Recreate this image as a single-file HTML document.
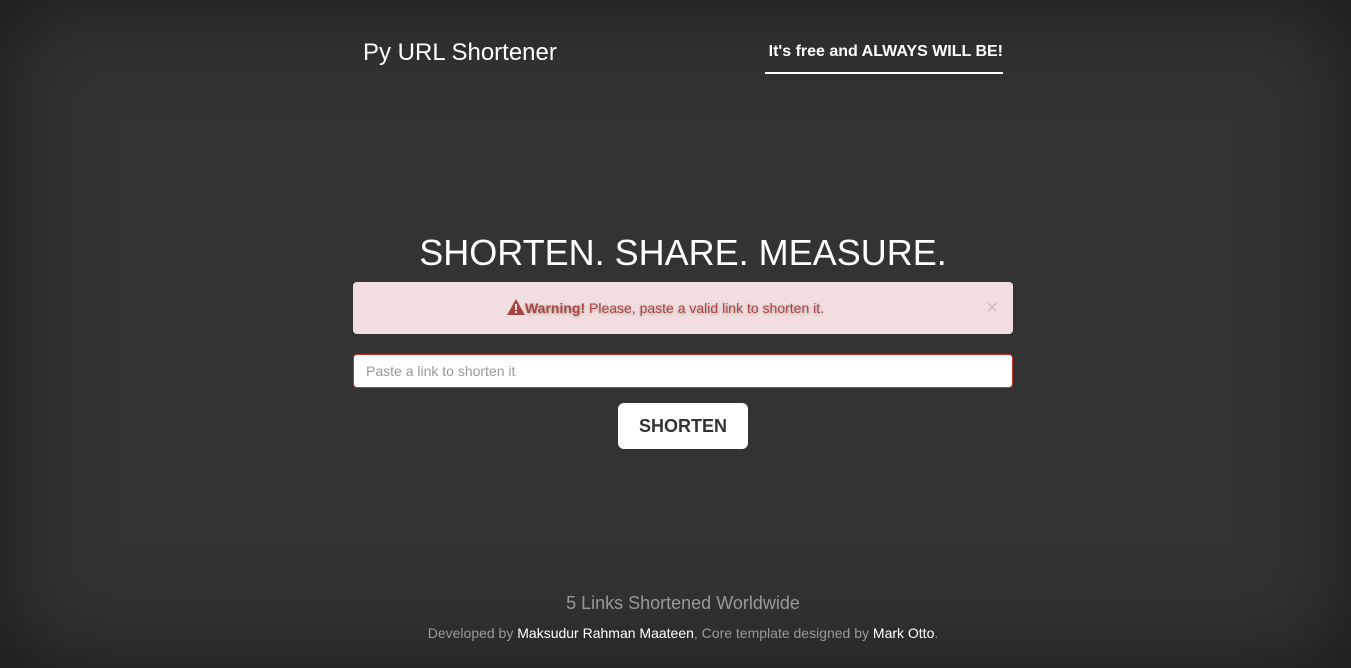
<!DOCTYPE html>
<html><head><meta charset="utf-8"><style>
html,body{margin:0;height:668px;overflow:hidden}
body{background:#333;box-shadow:inset 0 0 100px rgba(0,0,0,.5);font-family:"Liberation Sans",sans-serif;color:#fff;position:relative;width:1351px}
.abs{position:absolute}
.brand{left:363px;top:39px;font-size:24px}
.nav{left:765px;top:43px;font-size:16px;font-weight:bold;height:29px;border-bottom:2px solid #fff;width:238px;text-align:right}
h1{position:absolute;left:0;width:1366px;text-align:center;top:232px;margin:0;font-size:36px;font-weight:normal}
.alert{left:353px;top:282px;width:660px;height:52px;box-sizing:border-box;padding-right:35px;background:#f2dede;border-radius:4px;color:#a94442;font-size:14px;text-align:center;line-height:52px;text-shadow:0 1px 3px rgba(0,0,0,.3)}
.x{position:absolute;right:15px;top:0;color:#d9b9b9;font-size:20px;text-shadow:none}
.inp{left:353px;top:354px;width:660px;height:34px;box-sizing:border-box;background:#fff;border:1px solid #c9302c;border-radius:4px;color:#999;font-size:14px;line-height:32px;padding-left:12px}
.btn{left:618px;top:403px;width:130px;height:46px;background:#fff;border-radius:6px;color:#333;font-weight:bold;font-size:18px;text-align:center;line-height:46px}
.cnt{left:0;width:1366px;text-align:center;top:593px;font-size:18px;color:#999}
.ft{left:0;width:1366px;text-align:center;top:625px;font-size:14px;color:#999}
.ft span{color:#fff}
</style></head><body>
<div class="abs brand">Py URL Shortener</div>
<div class="abs nav">It's free and ALWAYS WILL BE!</div>
<h1>SHORTEN. SHARE. MEASURE.</h1>
<div class="abs alert"><svg width="18" height="16" viewBox="0 0 18 16" style="vertical-align:-2px"><path d="M9 0L18 16H0Z" fill="#a94442"/><rect x="8" y="5" width="2" height="6" fill="#f2dede"/><rect x="8" y="12" width="2" height="2" fill="#f2dede"/></svg><b>Warning!</b> Please, paste a valid link to shorten it.<span class="x">×</span></div>
<div class="abs inp">Paste a link to shorten it</div>
<div class="abs btn">SHORTEN</div>
<div class="abs cnt">5 Links Shortened Worldwide</div>
<div class="abs ft">Developed by <span>Maksudur Rahman Maateen</span>, Core template designed by <span>Mark Otto</span>.</div>
</body></html>
